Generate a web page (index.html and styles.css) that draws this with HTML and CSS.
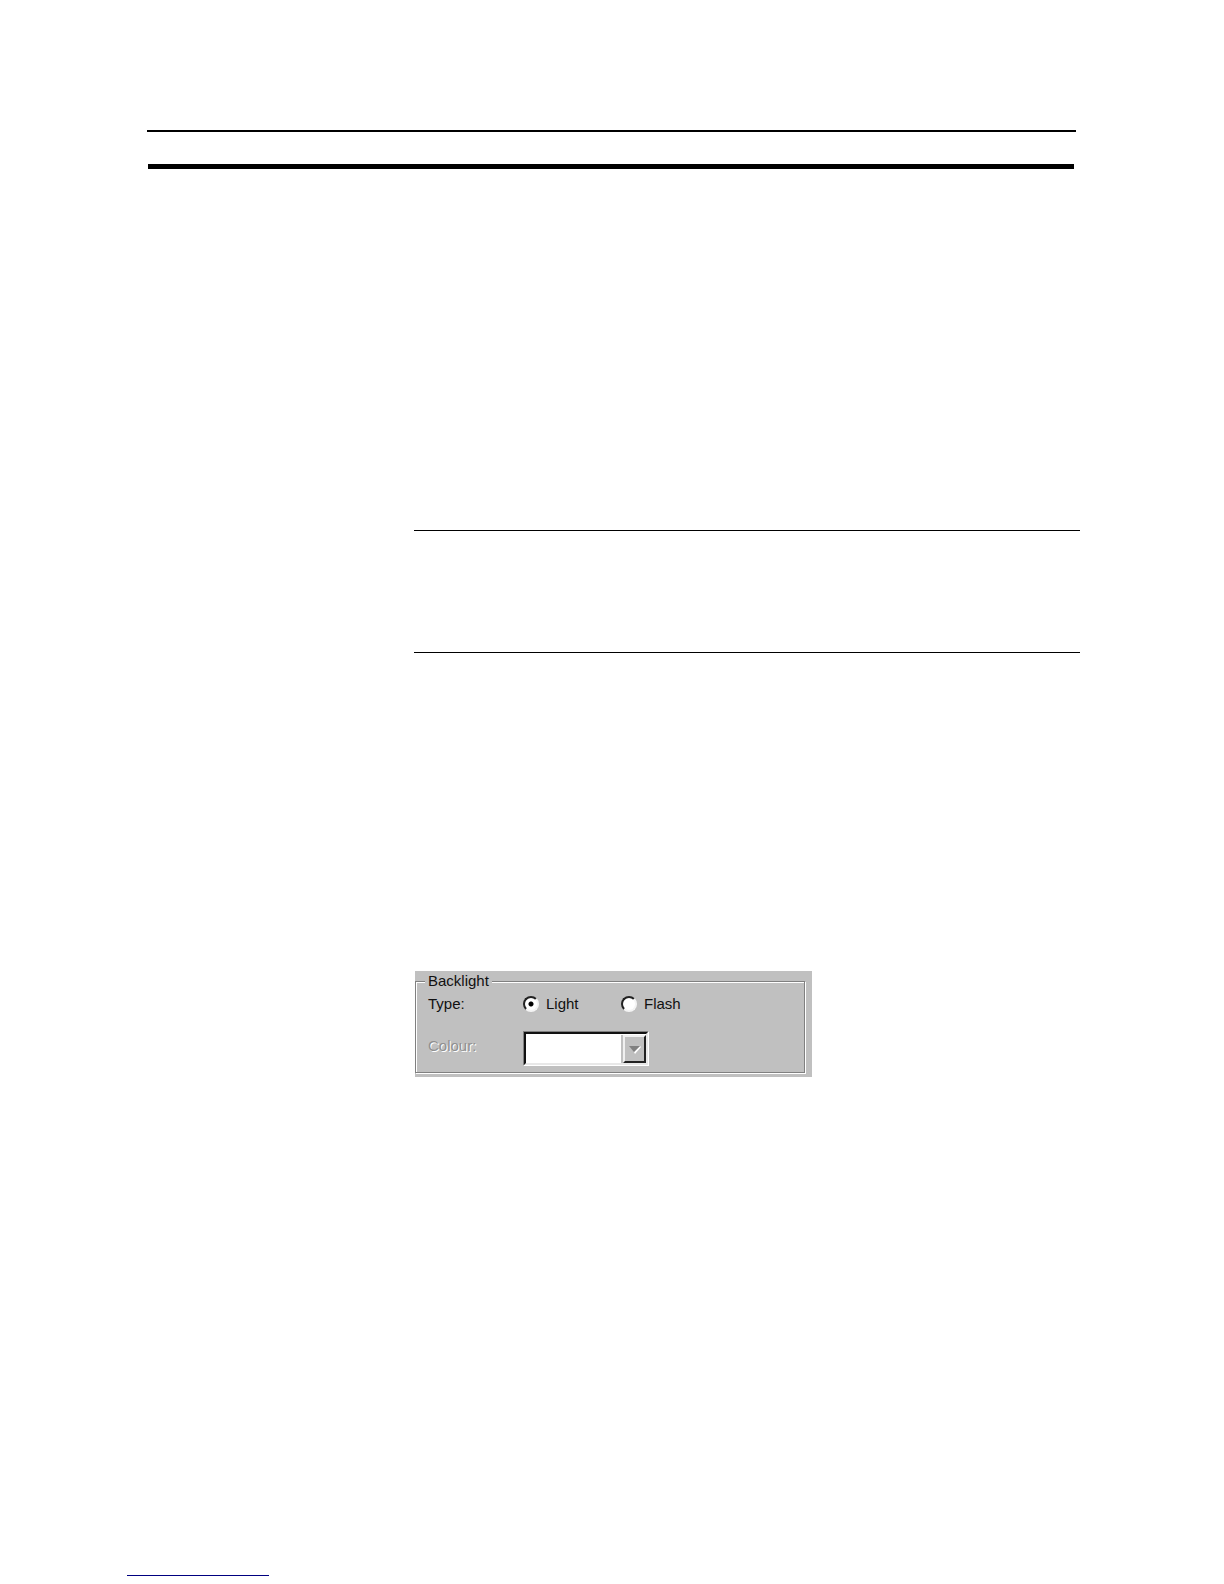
FILE: index.html
```html
<!DOCTYPE html>
<html lang="en">
  <head>
    <meta charset="UTF-8" />
    <meta name="viewport" content="width=device-width, initial-scale=1.0" />
    <title>Backlight</title>
    <link rel="stylesheet" href="styles.css">
  </head>
  <body>
    <header class="header">
      <hr class="thin" />
      <hr class="thick" />
    </header>
    <main class="content">
      <section class="note"></section>
      <form class="panel">
        <fieldset class="group">
          <legend>Backlight</legend>
          <div class="row" role="radiogroup" aria-labelledby="type">
            <span id="type">Type:</span>
            <label class="option"><input type="radio" name="type" value="light" checked />Light</label>
            <label class="option"><input type="radio" name="type" value="flash" />Flash</label>
          </div>
          <div class="row">
            <label class="disabled" for="colour">Colour:</label>
            <div class="combo">
              <select id="colour" disabled>
                <option></option>
              </select>
              <span class="arrow">
                <svg width="12" height="9" viewBox="0 0 12 9">
                  <path d="M11 1L12 2L6 9L5 7Z" fill="#fff" />
                  <path d="M0 1H11L5 7Z" fill="#808080" />
                </svg>
              </span>
            </div>
          </div>
        </fieldset>
      </form>
    </main>
    <footer class="footer">
      <hr class="link-line" />
    </footer>
  </body>
</html>
```

FILE: styles.css
```css
* {
  margin: 0;
  padding: 0;
  box-sizing: border-box;
}
body {
  display: flex;
  flex-direction: column;
  min-height: 100vh;
  background: #fff;
  color: #111;
  font: 15px/20px "Liberation Sans", Arial, sans-serif;
}
hr {
  border: 0;
  background: #000;
}
.header {
  padding: 130px 148px 0 147px;
}
.thin {
  height: 2px;
}
.thick {
  height: 5px;
  margin: 32px 2px 0 1px;
}
.content {
  padding: 361px 144px 0 414px;
}
.note {
  height: 123px;
  border-top: 1px solid #000;
  border-bottom: 1px solid #000;
}
/* grey dialog */
.panel {
  width: 397px;
  max-width: 100%;
  margin: 318px 0 0 1px;
  padding: 0 7px 4px 0;
  background: #c0c0c0;
}
.group {
  padding: 0 0 6px 12px;
  border: 1px solid #808080;
  box-shadow: 1px 1px 0 #fff, inset 1px 1px 0 #fff;
}
.group legend {
  margin-left: -3px;
  padding: 0 3px;
  background: #c0c0c0;
}
.row {
  display: grid;
  grid-template-columns: 95px 98px 1fr;
  align-items: center;
  min-height: 26px;
}
.row + .row {
  margin-top: 14px;
}
.option {
  display: flex;
  align-items: center;
  gap: 7px;
}
.option input {
  appearance: none;
  width: 16px;
  height: 16px;
  border: 2px solid;
  border-color: #222 #f4f4f4 #f4f4f4 #222;
  border-radius: 50%;
  background: #fff;
}
.option input:checked {
  background: radial-gradient(circle, #000 2px, #fff 3px);
}
.disabled {
  padding-bottom: 6px;
  color: #909090;
  text-shadow: 1px 1px 0 #fff;
}
/* drop-down */
.combo {
  position: relative;
  width: 126px;
  height: 35px;
  border: 1px solid;
  border-color: #808080 #fff #fff #808080;
}
.combo select {
  display: block;
  appearance: none;
  width: 100%;
  height: 100%;
  border: 2px solid;
  border-color: #111 #e8e8e8 #e8e8e8 #111;
  border-radius: 0;
  background: #fff;
  opacity: 1;
}
.arrow {
  position: absolute;
  top: 3px;
  right: 2px;
  bottom: 2px;
  display: flex;
  align-items: center;
  justify-content: center;
  width: 23px;
  border: 2px solid;
  border-color: #f0f0f0 #222 #222 #f0f0f0;
  background: #c0c0c0;
  box-shadow: -2px 0 0 #c0c0c0;
  pointer-events: none;
}
.footer {
  margin-top: auto;
  padding: 0 127px 8px;
}
.link-line {
  width: 142px;
  height: 1px;
  background: #000080;
}
```
